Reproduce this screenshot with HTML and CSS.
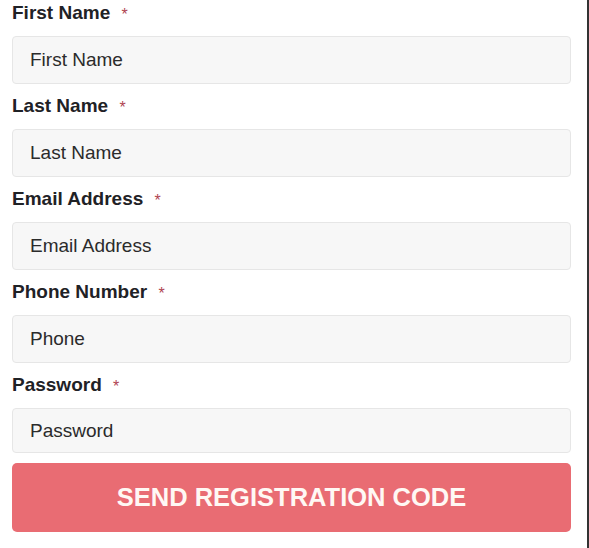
FILE: index.html
```html
<!DOCTYPE html>
<html lang="en">
<head>
<meta charset="utf-8">
<title>Register</title>
<link rel="stylesheet" href="styles.css">
</head>
<body>
<div class="page">
  <form class="form">
    <div class="field">
      <label class="label">First Name <span class="req">*</span></label>
      <input class="input" type="text" placeholder="First Name">
    </div>
    <div class="field">
      <label class="label">Last Name <span class="req">*</span></label>
      <input class="input" type="text" placeholder="Last Name">
    </div>
    <div class="field">
      <label class="label">Email Address <span class="req">*</span></label>
      <input class="input" type="text" placeholder="Email Address">
    </div>
    <div class="field">
      <label class="label">Phone Number <span class="req">*</span></label>
      <input class="input" type="text" placeholder="Phone">
    </div>
    <div class="field field-last">
      <label class="label">Password <span class="req">*</span></label>
      <input class="input input-short" type="password" placeholder="Password">
    </div>
    <button class="submit" type="button">SEND REGISTRATION CODE</button>
  </form>
</div>
</body>
</html>
```
FILE: styles.css
```css
html, body {
  margin: 0;
  padding: 0;
  background: #ffffff;
}
.page {
  box-sizing: border-box;
  width: 589px;
  height: 548px;
  border-right: 2px solid #333333;
  padding: 2px 16px 0 12px;
  font-family: "Liberation Sans", Arial, sans-serif;
}
.form {
  display: flex;
  flex-direction: column;
}
.field {
  display: flex;
  flex-direction: column;
  margin-bottom: 11px;
}
.field-last {
  margin-bottom: 10px;
}
.label {
  display: block;
  height: 22px;
  font-size: 19px;
  line-height: 22px;
  font-weight: bold;
  color: #1f2226;
  margin-bottom: 12px;
}
.req {
  color: #b04452;
  font-size: 16px;
  line-height: 0;
  font-weight: normal;
  margin-left: 6px;
  vertical-align: -1px;
}
.input {
  box-sizing: border-box;
  height: 48px;
  width: 100%;
  background: #f7f7f7;
  border: 1px solid #e6e6e6;
  border-radius: 4px;
  padding: 0 17px;
  font-family: "Liberation Sans", Arial, sans-serif;
  font-size: 19px;
  color: #2b2b2b;
  outline: none;
}
.input::placeholder {
  color: #2b2b2b;
  opacity: 1;
}
.input-short {
  height: 45px;
}
.submit {
  box-sizing: border-box;
  height: 69px;
  width: 100%;
  background: #e96c73;
  border: none;
  border-radius: 5px;
  color: #fff8f4;
  font-family: "Liberation Sans", Arial, sans-serif;
  font-weight: bold;
  font-size: 25.5px;
  cursor: pointer;
}
```
